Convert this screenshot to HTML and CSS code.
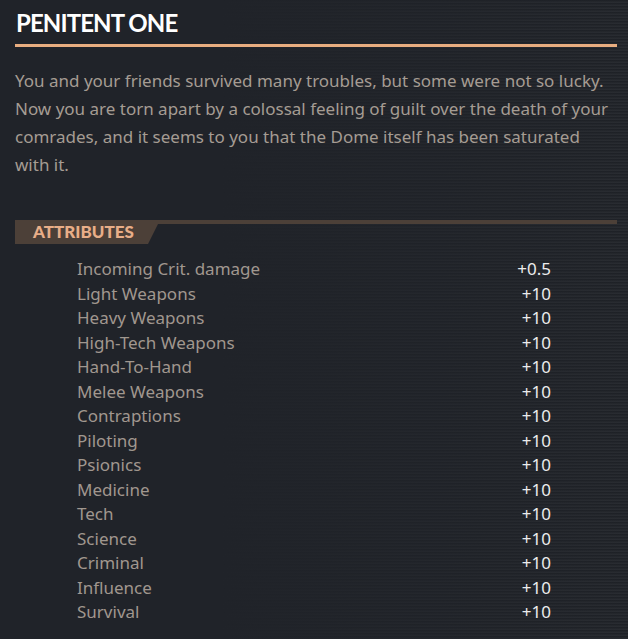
FILE: index.html
```html
<!DOCTYPE html>
<html>
<head>
<meta charset="utf-8">
<link rel="stylesheet" href="styles.css">
</head>
<body>
<div class="panel">
  <h1 class="title">PENITENT ONE</h1>
  <div class="rule"></div>
  <p class="desc">You and your friends survived many troubles, but some were not so lucky. Now you are torn apart by a colossal feeling of guilt over the death of your comrades, and it seems to you that the Dome itself has been saturated with it.</p>
  <div class="attr-head"><div class="attr-tab">ATTRIBUTES</div></div>
  <div class="attr-list">
    <div class="attr-row"><span class="label">Incoming Crit. damage</span><span class="value">+0.5</span></div>
    <div class="attr-row"><span class="label">Light Weapons</span><span class="value">+10</span></div>
    <div class="attr-row"><span class="label">Heavy Weapons</span><span class="value">+10</span></div>
    <div class="attr-row"><span class="label">High-Tech Weapons</span><span class="value">+10</span></div>
    <div class="attr-row"><span class="label">Hand-To-Hand</span><span class="value">+10</span></div>
    <div class="attr-row"><span class="label">Melee Weapons</span><span class="value">+10</span></div>
    <div class="attr-row"><span class="label">Contraptions</span><span class="value">+10</span></div>
    <div class="attr-row"><span class="label">Piloting</span><span class="value">+10</span></div>
    <div class="attr-row"><span class="label">Psionics</span><span class="value">+10</span></div>
    <div class="attr-row"><span class="label">Medicine</span><span class="value">+10</span></div>
    <div class="attr-row"><span class="label">Tech</span><span class="value">+10</span></div>
    <div class="attr-row"><span class="label">Science</span><span class="value">+10</span></div>
    <div class="attr-row"><span class="label">Criminal</span><span class="value">+10</span></div>
    <div class="attr-row"><span class="label">Influence</span><span class="value">+10</span></div>
    <div class="attr-row"><span class="label">Survival</span><span class="value">+10</span></div>
  </div>
</div>
</body>
</html>
```

FILE: styles.css
```css
html, body {
  margin: 0;
  height: 100%;
}
body {
  background:
    linear-gradient(to right, #202329 0%, #202329 35%, rgba(32,35,41,0.55) 75%, rgba(32,35,41,0.2) 100%),
    repeating-linear-gradient(to bottom, #1e2126 0px, #1e2126 1px, #2b2e33 2px, #2b2e33 3px);
  background-color: #212429;
  font-family: "Noto Sans", "Open Sans", sans-serif;
  overflow: hidden;
}
.panel {
  padding: 8px 11px 0 15px;
}
.title {
  margin: 0 0 0 1px;
  font-family: Lato, "Liberation Sans", sans-serif;
  font-weight: 700;
  font-size: 24px;
  line-height: 30px;
  color: #ffffff;
  letter-spacing: -0.9px;
}
.rule {
  margin-top: 6px;
  height: 3px;
  background: #e8ad80;
}
.desc {
  margin: 20px 0 0 0;
  font-size: 17px;
  line-height: 28px;
  color: #a59c93;
}
.attr-head {
  margin-top: 41px;
  height: 24px;
  background: linear-gradient(#4c4038, #4c4038) top left / 100% 4px no-repeat;
}
.attr-tab {
  width: 145px;
  height: 24px;
  box-sizing: border-box;
  padding-left: 18px;
  background: #4c4038;
  clip-path: polygon(0 0, 100% 0, calc(100% - 12px) 100%, 0 100%);
  font-family: Lato, "Liberation Sans", sans-serif;
  font-weight: 900;
  font-size: 17px;
  line-height: 24px;
  color: #e8ae88;
}
.attr-list {
  margin-top: 13px;
  padding-left: 62px;
  width: 474px;
}
.attr-row {
  display: flex;
  justify-content: space-between;
  height: 24.5px;
  line-height: 24px;
  font-size: 17px;
}
.label {
  color: #a0978f;
}
.value {
  color: #ececec;
}
```
